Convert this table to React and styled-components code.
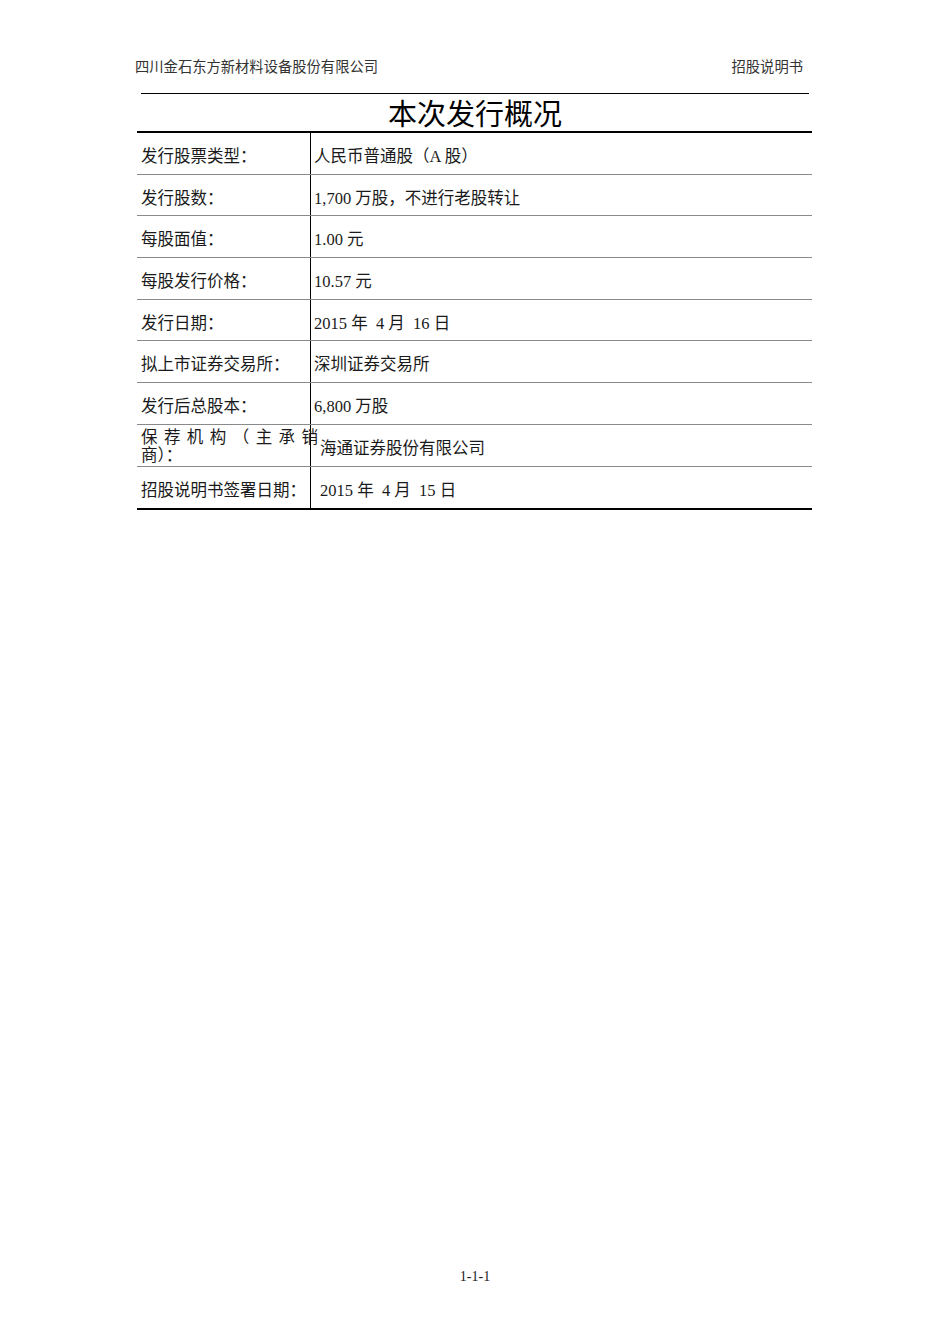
import React from "react";
import styled, { createGlobalStyle } from "styled-components";

const Global = createGlobalStyle`
  html, body { margin: 0; padding: 0; background: #fff; }
  body { font-family: "Liberation Serif", "Noto Sans CJK SC", serif; color: #1a1a1a; }
  * { box-sizing: border-box; }
`;

const Page = styled.div`
  width: 950px;
  min-height: 1344px;
  display: flex;
  flex-direction: column;
  padding-top: 57px;
  padding-bottom: 57px;
`;

const HeaderRow = styled.div`
  display: flex;
  justify-content: space-between;
  margin: 0 147px 0 135px;
  font-size: 14.3px;
  line-height: 20px;
  color: #333;
`;

const HeaderRule = styled.div`
  margin: 16px 141px 0 141px;
  border-top: 1px solid #000;
`;

const Title = styled.h1`
  margin: 0;
  text-align: center;
  font-family: "Noto Sans CJK SC", sans-serif;
  font-weight: 400;
  font-size: 29px;
  line-height: 37px;
  height: 37px;
  color: #000;
`;

const Table = styled.div`
  margin: 0 138px 0 137px;
  border-top: 2px solid #000;
  border-bottom: 2px solid #000;
`;

const Row = styled.div`
  display: grid;
  grid-template-columns: 174px 1fr;
  height: 41.7px;
  border-bottom: ${(p) => (p.$last ? "none" : "1px solid #8a8a8a")};
  font-size: 16.5px;
`;

const Label = styled.div`
  display: flex;
  flex-direction: column;
  justify-content: center;
  padding: 3px 0 0 4px;
  border-right: 1px solid #000;
  white-space: nowrap;
`;

const Value = styled.div`
  display: flex;
  align-items: center;
  padding-top: 3px;
  padding-left: ${(p) => (p.$indent ? "9px" : "3px")};
  white-space: pre;
`;

const JustLine = styled.div`
  width: 177px;
  text-align: justify;
  text-align-last: justify;
  line-height: 18px;
  white-space: normal;
`;

const PlainLine = styled.div`
  line-height: 18px;
`;

const Footer = styled.div`
  margin-top: auto;
  text-align: center;
  font-size: 14px;
  line-height: 20px;
  color: #1a1a1a;
`;

const rows = [
  ["发行股票类型：", "人民币普通股（A 股）"],
  ["发行股数：", "1,700 万股，不进行老股转让"],
  ["每股面值：", "1.00 元"],
  ["每股发行价格：", "10.57 元"],
  ["发行日期：", "2015 年  4 月  16 日"],
  ["拟上市证券交易所：", "深圳证券交易所"],
  ["发行后总股本：", "6,800 万股"],
];

export default function App() {
  return (
    <>
      <Global />
      <Page>
        <HeaderRow>
          <span>四川金石东方新材料设备股份有限公司</span>
          <span>招股说明书</span>
        </HeaderRow>
        <HeaderRule />
        <Title>本次发行概况</Title>
        <Table>
          {rows.map(([l, v]) => (
            <Row key={l}>
              <Label>{l}</Label>
              <Value>{v}</Value>
            </Row>
          ))}
          <Row>
            <Label>
              <JustLine>保 荐 机 构 （ 主 承 销</JustLine>
              <PlainLine>商）：</PlainLine>
            </Label>
            <Value $indent>海通证券股份有限公司</Value>
          </Row>
          <Row $last>
            <Label>招股说明书签署日期：</Label>
            <Value $indent>2015 年  4 月  15 日</Value>
          </Row>
        </Table>
        <Footer>1-1-1</Footer>
      </Page>
    </>
  );
}
